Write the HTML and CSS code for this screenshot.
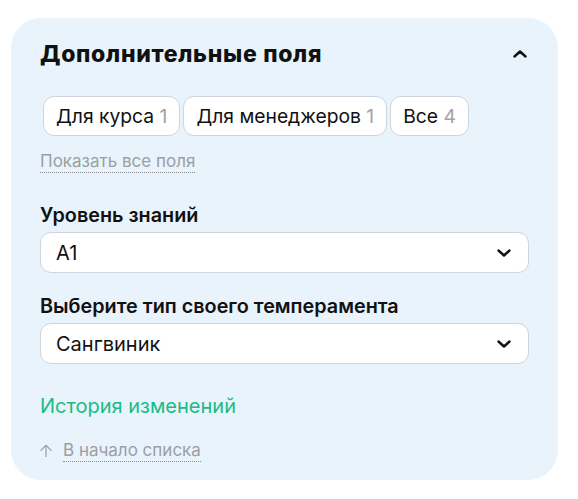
FILE: index.html
```html
<!DOCTYPE html>
<html lang="ru">
<head>
<meta charset="utf-8">
<link rel="stylesheet" href="styles.css">
</head>
<body>
<section class="card">
  <div class="head">
    <h2 class="title">Дополнительные поля</h2>
    <button class="collapse" aria-label="Свернуть">
      <svg width="14" height="8" viewBox="0 0 14 8"><path d="M1.5 6.5 L7 1.5 L12.5 6.5" fill="none" stroke="#111" stroke-width="2.4" stroke-linecap="round" stroke-linejoin="round"/></svg>
    </button>
  </div>
  <div class="chips">
    <span class="chip">Для курса <span class="count">1</span></span>
    <span class="chip">Для менеджеров <span class="count">1</span></span>
    <span class="chip">Все <span class="count">4</span></span>
  </div>
  <a class="dotted show-all">Показать все поля</a>

  <div class="field first">
    <div class="label">Уровень знаний</div>
    <div class="select">
      <span>A1</span>
      <svg width="14" height="8" viewBox="0 0 14 8"><path d="M1.5 1.5 L7 6.5 L12.5 1.5" fill="none" stroke="#111" stroke-width="2.4" stroke-linecap="round" stroke-linejoin="round"/></svg>
    </div>
  </div>
  <div class="field">
    <div class="label">Выберите тип своего темперамента</div>
    <div class="select">
      <span>Сангвиник</span>
      <svg width="14" height="8" viewBox="0 0 14 8"><path d="M1.5 1.5 L7 6.5 L12.5 1.5" fill="none" stroke="#111" stroke-width="2.4" stroke-linecap="round" stroke-linejoin="round"/></svg>
    </div>
  </div>

  <a class="history">История изменений</a>
  <div class="totop">
    <svg class="arrow" width="12" height="13" viewBox="0 0 12 13"><path d="M6 12.5 V1.2 M1 6.2 L6 1.2 L11 6.2" fill="none" stroke="#9ea6ae" stroke-width="1.3" stroke-linecap="round" stroke-linejoin="round"/></svg>
    <a class="dotted">В начало списка</a>
  </div>
</section>
</body>
</html>
```

FILE: styles.css
```css
* { box-sizing: border-box; }
body {
  margin: 0;
  background: #fff;
  font-family: Inter, "Noto Sans", sans-serif;
  color: #111;
}
.card {
  margin: 18px 20px 0 11px;
  width: 547px;
  height: 462px;
  background: #e8f3fb;
  border-radius: 30px;
  padding: 0 29px;
  display: flex;
  flex-direction: column;
}
.head {
  display: flex;
  align-items: center;
  justify-content: space-between;
  height: 28px;
  margin-top: 22px;
}
.title {
  margin: 0;
  font-size: 23px;
  line-height: 28px;
  font-weight: 800;
  letter-spacing: 0.7px;
}
.collapse {
  background: none;
  border: 0;
  padding: 0;
  margin-right: 2px;
  display: flex;
}
.chips {
  display: flex;
  gap: 3px;
  margin-top: 28px;
  margin-left: 3px;
}
.chip {
  height: 40px;
  padding: 0 12px;
  background: #fff;
  border: 1px solid #cdd6df;
  border-radius: 11px;
  display: flex;
  align-items: center;
  font-size: 19.3px;
  white-space: pre;
}
.count { color: #a3a3a3; }
.dotted {
  color: #9c9ea3;
  border-bottom: 1px dotted #8a8c90;
  font-size: 17px;
  line-height: 20px;
  padding-bottom: 1px;
  align-self: flex-start;
}
.show-all { margin-top: 15px; }
.field { display: flex; flex-direction: column; }
.field.first { margin-top: 30px; }
.field + .field { margin-top: 21px; }
.label {
  font-size: 19.8px;
  font-weight: 600;
  line-height: 24px;
  margin-bottom: 5px;
}
.select {
  height: 41px;
  background: #fff;
  border: 1px solid #cdd6df;
  border-radius: 11px;
  display: flex;
  align-items: center;
  justify-content: space-between;
  padding: 0 17px 0 15px;
  font-size: 20px;
}
.history {
  margin-top: 30px;
  color: #1bbb85;
  font-size: 20px;
  line-height: 24px;
  align-self: flex-start;
}
.totop {
  margin-top: 22px;
  display: flex;
  align-items: center;
  gap: 11px;
}
.arrow { flex: none; margin-top: -2px; }
```
